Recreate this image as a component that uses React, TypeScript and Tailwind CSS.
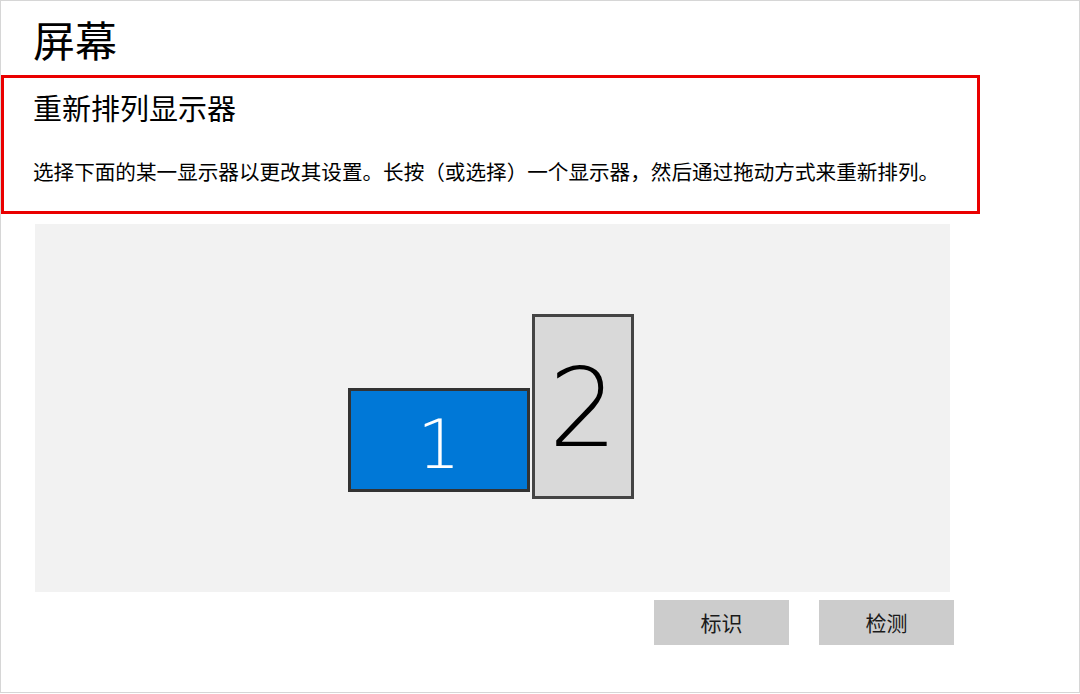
import React from "react";

const cjk = { fontFamily: '"Noto Sans CJK SC", "Noto Sans", sans-serif' };
const thin = { fontFamily: '"DejaVu Sans", "Noto Sans", sans-serif' };

export default function App() {
  return (
    <div
      className="w-[1080px] h-[693px] bg-white border border-[#d6d6d6] text-black overflow-hidden"
      style={cjk}
    >
      <h1 className="pl-[32px] pt-[12px] h-[74px] text-[42px] leading-[52px] font-normal">
        屏幕
      </h1>

      <section className="w-[979px] h-[139px] border-[3px] border-[#ea0000] pl-[29px]">
        <h2 className="pt-[11px] text-[29px] leading-[36px] font-normal">重新排列显示器</h2>
        <p className="mt-[32px] text-[20.6px] leading-[28px]">
          选择下面的某一显示器以更改其设置。长按（或选择）一个显示器，然后通过拖动方式来重新排列。
        </p>
      </section>

      <div className="ml-[34px] mt-[10px] w-[915px] h-[368px] bg-[#f2f2f2] flex items-start pl-[313px] pt-[90px]">
        <div className="mt-[74px] w-[182px] h-[104px] bg-[#0078d7] border-[3px] border-[#333333] flex items-center justify-center">
          <span className="text-white text-[68px] leading-none font-extralight mt-[10px]" style={thin}>
            1
          </span>
        </div>
        <div className="ml-[2px] w-[102px] h-[185px] bg-[#d9d9d9] border-[3px] border-[#444444] flex items-center justify-center">
          <span className="text-black text-[108px] leading-none font-extralight mt-[4px]" style={thin}>
            2
          </span>
        </div>
      </div>

      <div className="mt-[8px] ml-[653px] flex gap-[30px]">
        <button className="w-[135px] h-[45px] bg-[#cccccc] text-[21px] leading-none text-[#1a1a1a]">
          标识
        </button>
        <button className="w-[135px] h-[45px] bg-[#cccccc] text-[21px] leading-none text-[#1a1a1a]">
          检测
        </button>
      </div>
    </div>
  );
}
